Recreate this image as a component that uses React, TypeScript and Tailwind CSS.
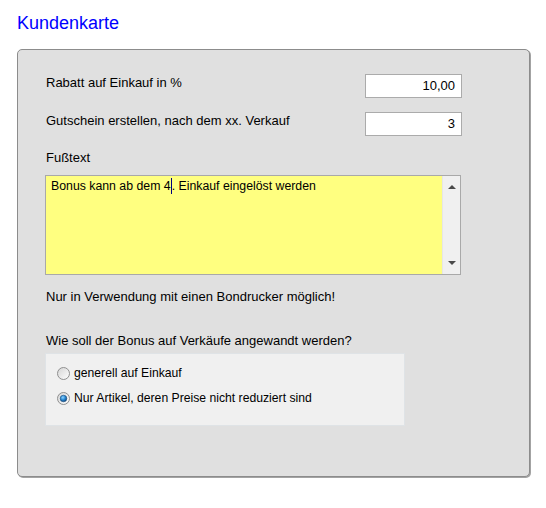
import React from "react";

function Radio({ checked }: { checked?: boolean }) {
  return (
    <svg width="13" height="13" viewBox="0 0 13 13" className="shrink-0">
      <defs>
        <linearGradient id={checked ? "rgc" : "rgu"} x1="0" y1="0" x2="1" y2="1">
          <stop offset="0" stopColor="#d4d4d4" />
          <stop offset="1" stopColor="#ffffff" />
        </linearGradient>
        <radialGradient id="dot" cx="0.4" cy="0.35" r="0.7">
          <stop offset="0" stopColor="#8fd3ff" />
          <stop offset="0.5" stopColor="#2a8ad4" />
          <stop offset="1" stopColor="#0b3f78" />
        </radialGradient>
      </defs>
      <circle cx="6.5" cy="6.5" r="6" fill={`url(#${checked ? "rgc" : "rgu"})`} stroke="#8f8f8f" strokeWidth="1" />
      {checked && <circle cx="6.5" cy="6.5" r="3.3" fill="url(#dot)" stroke="#1d4f80" strokeWidth="0.6" />}
    </svg>
  );
}

export default function App() {
  return (
    <div className="w-[546px] h-[508px] bg-white font-['Liberation_Sans',Arial,sans-serif] text-black overflow-hidden">
      <div className="pl-[17px] pt-[13px] text-[18px] leading-[20px] text-[#0000ff]">Kundenkarte</div>
      <div className="ml-[17px] mt-[16px] w-[513px] h-[428px] bg-[#e0e0e0] border border-[#8c8c8c] rounded-[5px] shadow-[1px_1px_0_#a3a3a3] pl-[27px] pt-[24px]">
        <div className="w-[417px] text-[13px] leading-[16px]">
          <div className="flex justify-between items-start">
            <div className="pt-px pl-px">Rabatt auf Einkauf in %</div>
            <div className="w-[97px] h-[24px] border border-[#ababab] bg-white flex items-center justify-end pr-[6px]">10,00</div>
          </div>
          <div className="flex justify-between items-start mt-[14px]">
            <div className="pt-px pl-px">Gutschein erstellen, nach dem xx. Verkauf</div>
            <div className="w-[97px] h-[24px] border border-[#ababab] bg-white flex items-center justify-end pr-[6px]">3</div>
          </div>
          <div className="mt-[14px] pl-px">Fußtext</div>
          <div className="mt-[9px] w-[416px] h-[100px] border border-[#a9a9a9] bg-[#ffff80] flex">
            <div className="flex-1 pl-[5px] pt-[2px] text-[12.3px]">
              Bonus kann ab dem 4<span className="inline-block w-px h-[16px] bg-[#000080] align-top"></span>. Einkauf eingelöst werden
            </div>
            <div className="w-[18px] h-full bg-[#f0f0f0] border-l border-[#e6e6e6] flex flex-col items-center justify-between py-[8px]">
              <svg width="8" height="5" viewBox="0 0 8 5"><path d="M0 5 L4 1 L8 5 Z" fill="#4a4a4a" /></svg>
              <svg width="8" height="5" viewBox="0 0 8 5"><path d="M0 0 L4 4 L8 0 Z" fill="#4a4a4a" /></svg>
            </div>
          </div>
          <div className="mt-[14px] pl-px">Nur in Verwendung mit einen Bondrucker möglich!</div>
          <div className="mt-[28px] pl-px">Wie soll der Bonus auf Verkäufe angewandt werden?</div>
          <div className="mt-[4px] w-[360px] h-[73px] bg-[#f0f0f0] border border-[#dfe3e6] pl-[11px] pt-[11px] text-[12.2px]">
            <div className="flex items-center gap-[4px] h-[16px]">
              <Radio />
              <span>generell auf Einkauf</span>
            </div>
            <div className="flex items-center gap-[4px] h-[16px] mt-[9px]">
              <Radio checked />
              <span>Nur Artikel, deren Preise nicht reduziert sind</span>
            </div>
          </div>
        </div>
      </div>
    </div>
  );
}
